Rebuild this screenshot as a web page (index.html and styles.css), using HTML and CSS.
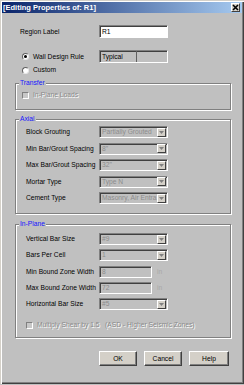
FILE: index.html
```html
<!DOCTYPE html>
<html lang="en">
<head>
    <meta charset="UTF-8">
    <meta name="viewport" content="width=device-width, initial-scale=1.0">
    <title>Editing Properties of: R1</title>
    <link rel="stylesheet" href="styles.css">
</head>
<body>
    <div class="window">
        <div class="titlebar">
            <span class="title">[Editing Properties of: R1]</span>
            <span class="close">
                <svg width="7" height="7" viewBox="0 0 7 7"><path d="M1 1L6 6M6 1L1 6" stroke="#000" stroke-width="1.6"/></svg>
            </span>
        </div>

        <div class="content">
            <div class="row region-row">
                <span class="label">Region Label</span>
                <div class="edit white">R1</div>
            </div>

            <div class="row radio-row rule-row">
                <span class="option"><span class="radio checked"></span>Wall Design Rule</span>
                <div class="edit split"><span class="pane">Typical</span><span class="pane"></span></div>
            </div>
            <div class="row radio-row custom-row">
                <span class="option"><span class="radio"></span>Custom</span>
            </div>

            <!-- Transfer -->
            <fieldset class="group transfer">
                <legend>Transfer</legend>
                <div class="group-body">
                    <span class="check-line"><span class="check"></span><span class="disabled-text">In-Plane Loads</span></span>
                </div>
            </fieldset>

            <!-- Axial -->
            <fieldset class="group axial">
                <legend>Axial</legend>
                <div class="group-body grid">
                    <span class="label">Block Grouting</span>
                    <div class="combo"><span class="val">Partially Grouted</span><span class="drop"><svg width="5" height="3" viewBox="0 0 5 3"><path d="M0 0H5L2.5 3Z" fill="#808080"/></svg></span></div>
                    <span class="label">Min Bar/Grout Spacing</span>
                    <div class="combo"><span class="val">8"</span><span class="drop"><svg width="5" height="3" viewBox="0 0 5 3"><path d="M0 0H5L2.5 3Z" fill="#808080"/></svg></span></div>
                    <span class="label">Max Bar/Grout Spacing</span>
                    <div class="combo"><span class="val">32"</span><span class="drop"><svg width="5" height="3" viewBox="0 0 5 3"><path d="M0 0H5L2.5 3Z" fill="#808080"/></svg></span></div>
                    <span class="label">Mortar Type</span>
                    <div class="combo"><span class="val">Type N</span><span class="drop"><svg width="5" height="3" viewBox="0 0 5 3"><path d="M0 0H5L2.5 3Z" fill="#808080"/></svg></span></div>
                    <span class="label">Cement Type</span>
                    <div class="combo"><span class="val">Masonry, Air Entra</span><span class="drop"><svg width="5" height="3" viewBox="0 0 5 3"><path d="M0 0H5L2.5 3Z" fill="#808080"/></svg></span></div>
                </div>
            </fieldset>

            <!-- In-Plane -->
            <fieldset class="group inplane">
                <legend>In-Plane</legend>
                <div class="group-body">
                    <div class="grid">
                        <span class="label">Vertical Bar Size</span>
                        <div class="combo"><span class="val">#9</span><span class="drop"><svg width="5" height="3" viewBox="0 0 5 3"><path d="M0 0H5L2.5 3Z" fill="#808080"/></svg></span></div>
                        <span class="label">Bars Per Cell</span>
                        <div class="combo"><span class="val">1</span><span class="drop"><svg width="5" height="3" viewBox="0 0 5 3"><path d="M0 0H5L2.5 3Z" fill="#808080"/></svg></span></div>
                        <span class="label">Min Bound Zone Width</span>
                        <div class="unit-field"><div class="edit short">8</div><span class="unit">in</span></div>
                        <span class="label">Max Bound Zone Width</span>
                        <div class="unit-field"><div class="edit short">72</div><span class="unit">in</span></div>
                        <span class="label">Horizontal Bar Size</span>
                        <div class="combo"><span class="val">#5</span><span class="drop"><svg width="5" height="3" viewBox="0 0 5 3"><path d="M0 0H5L2.5 3Z" fill="#808080"/></svg></span></div>
                    </div>
                    <span class="check-line shear"><span class="check"></span><span class="disabled-text">Multiply Shear by 1.5   (ASD - Higher Seismic Zones)</span></span>
                </div>
            </fieldset>

            <div class="buttons">
                <span class="button ok">OK</span>
                <span class="button">Cancel</span>
                <span class="button help">Help</span>
            </div>
        </div>
    </div>
</body>
</html>
```

FILE: styles.css
```css
*{
    margin: 0;
    padding: 0;
    box-sizing: border-box;
}
html,body{
    background-color: #c0c0c0;
}
body{
    font-family: "Liberation Sans", Arial, sans-serif;
    font-size: 6.7px;
    line-height: 8px;
    color: #000;
}
.window{
    width: 244px;
    height: 384px;
    background-color: #c0c0c0;
    box-shadow: inset 1px 1px #d4d0c8, inset 2px 2px #fff, inset -1px -1px #404040, inset -2px -2px #808080;
    overflow: hidden;
}

/* title bar */
.titlebar{
    margin: 2px 2px 0 2px;
    height: 11px;
    display: flex;
    align-items: center;
    justify-content: space-between;
    background: linear-gradient(to right, #0a246a, #a6caf0);
}
.title{
    padding-left: 1px;
    color: #fff;
    font-weight: bold;
    font-size: 7.5px;
}
.close{
    width: 9px;
    height: 9px;
    margin-right: 2px;
    display: flex;
    align-items: center;
    justify-content: center;
    background-color: #d4d0c8;
    border: 1px solid;
    border-color: #fff #404040 #404040 #fff;
}

.content{
    padding: 0 13px 0 15px;
}

/* top rows */
.row{
    display: grid;
    align-items: center;
}
.region-row{
    margin-top: 12px;
    padding-left: 5px;
    grid-template-columns: 79px 69px;
}
.radio-row{
    padding-left: 7px;
    grid-template-columns: 77px 69px;
}
.rule-row{
    margin-top: 12px;
}
.custom-row{
    margin-top: 2px;
    height: 10px;
}
.option{
    display: flex;
    align-items: center;
    gap: 4px;
}
.radio{
    width: 7px;
    height: 7px;
    border-radius: 50%;
    background-color: #fff;
    border: 1px solid;
    border-color: #606060 #e8e8e8 #e8e8e8 #606060;
    display: flex;
    align-items: center;
    justify-content: center;
}
.radio.checked::after{
    content: "";
    width: 3px;
    height: 3px;
    border-radius: 50%;
    background-color: #000;
}

/* edit boxes */
.edit{
    height: 13px;
    display: flex;
    align-items: center;
    padding-left: 2px;
    border: 1px solid;
    border-color: #808080 #fff #fff #808080;
    box-shadow: inset 1px 1px #404040;
    background-color: #c0c0c0;
    color: #8c8c8c;
}
.edit.white{
    background-color: #fff;
    color: #000;
}
.edit.split{
    padding-left: 0;
    color: #000;
}
.pane{
    height: 100%;
    display: flex;
    align-items: center;
    padding-left: 2px;
}
.pane:first-child{
    width: 37px;
    border-right: 1px solid #606060;
}
.edit.short{
    width: 53px;
    height: 12px;
}
.unit-field{
    display: flex;
    align-items: center;
}
.unit{
    margin-left: 5px;
    color: #a8a8a8;
}

/* group boxes */
.group{
    border: 1px solid #808080;
    box-shadow: inset 1px 1px #fff, 1px 1px #fff;
    padding: 0;
    min-width: 0;
}
.group legend{
    margin-left: 3px;
    padding: 0 1px;
    line-height: 8px;
    color: #1414ff;
    background-color: #c0c0c0;
}
.transfer{
    margin-top: 4px;
}
.transfer .group-body{
    padding: 3px 0 9px 6px;
}
.axial{
    margin-top: 5px;
}
.axial .group-body{
    padding: 3px 0 9px 10px;
}
.inplane{
    margin-top: 6px;
}
.inplane .group-body{
    padding: 5px 0 7px 10px;
}
.grid{
    display: grid;
    grid-template-columns: 73px 69px;
    align-items: center;
    row-gap: 4.5px;
}
.inplane .grid{
    row-gap: 4.25px;
}

/* combos */
.combo{
    height: 12px;
    display: flex;
    align-items: center;
    padding-left: 2px;
    border: 1px solid;
    border-color: #808080 #fff #fff #808080;
    box-shadow: inset 1px 1px #404040;
    color: #8c8c8c;
}
.combo .val{
    flex: 1;
    white-space: nowrap;
}
.drop{
    width: 9px;
    height: 9px;
    margin-right: 1px;
    display: flex;
    align-items: center;
    justify-content: center;
    background-color: #d4d0c8;
    border: 1px solid;
    border-color: #fff #404040 #404040 #fff;
}

/* checkboxes */
.check-line{
    height: 10px;
    display: flex;
    align-items: center;
    gap: 4px;
}
.check-line.shear{
    margin-top: 10px;
}
.check{
    width: 7px;
    height: 7px;
    background-color: #c8c8c8;
    border: 1px solid;
    border-color: #808080 #fff #fff #808080;
}
.disabled-text{
    color: #8a8a8a;
    text-shadow: 1px 1px #fff;
    white-space: pre;
}

/* buttons */
.buttons{
    margin-top: 13px;
    margin-left: 84px;
    display: flex;
    gap: 7px;
}
.button{
    width: 38px;
    height: 15px;
    display: flex;
    align-items: center;
    justify-content: center;
    background-color: #d4d0c8;
    border: 1px solid;
    border-color: #fff #404040 #404040 #fff;
    box-shadow: inset -1px -1px #808080;
}
.button.help{
    width: 40px;
}
```
